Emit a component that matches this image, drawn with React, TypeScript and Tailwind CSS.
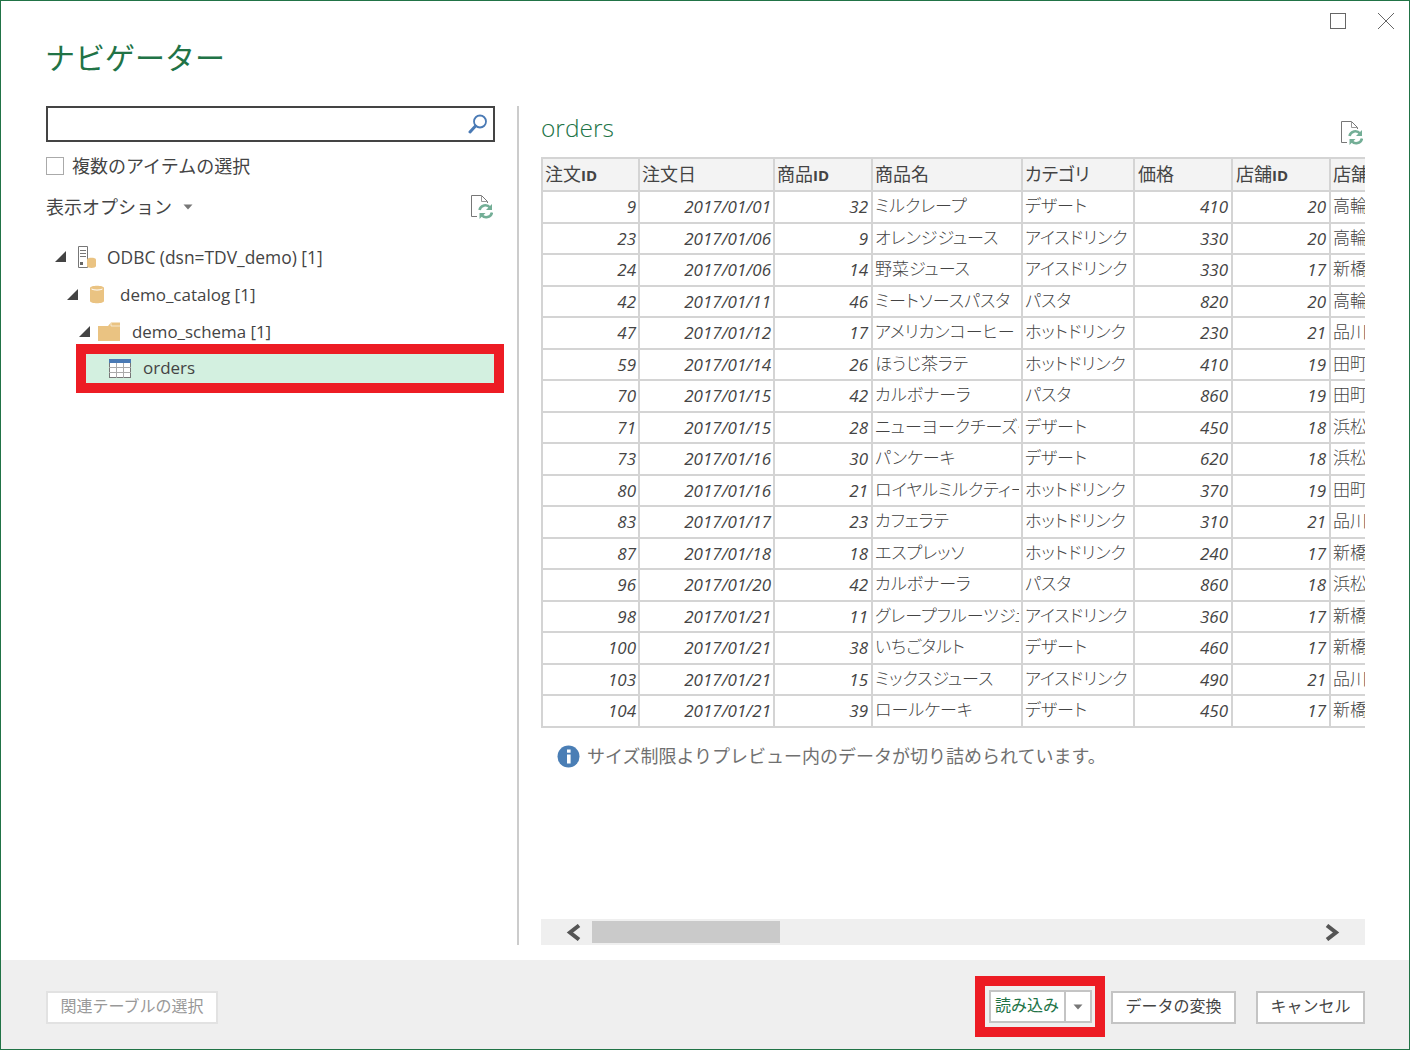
const columns = [
  { label: "注文", id: true, width: "w-[97px]", head: "pl-[2px]", num: "pr-[2px]" },
  { label: "注文日", width: "w-[135px]", head: "pl-[2px]", num: "pr-[2px]" },
  { label: "商品", id: true, width: "w-[98px]", head: "pl-[2px]", num: "pr-[3px]" },
  { label: "商品名", width: "w-[150px]", head: "pl-[2px]", num: "" },
  { label: "カテゴリ", width: "w-[112px]", head: "pl-[2px]", num: "" },
  { label: "価格", width: "w-[98px]", head: "pl-[3px]", num: "pr-[3px]" },
  { label: "店舗", id: true, width: "w-[98px]", head: "pl-[3px]", num: "pr-[3px]" },
  { label: "店舗名", width: "w-[60px]", head: "pl-[2px]", num: "" },
];

const rows = [
  ["9", "2017/01/01", "32", "ミルクレープ", "デザート", "410", "20", "高輪台"],
  ["23", "2017/01/06", "9", "オレンジジュース", "アイスドリンク", "330", "20", "高輪台"],
  ["24", "2017/01/06", "14", "野菜ジュース", "アイスドリンク", "330", "17", "新橋店"],
  ["42", "2017/01/11", "46", "ミートソースパスタ", "パスタ", "820", "20", "高輪台"],
  ["47", "2017/01/12", "17", "アメリカンコーヒー", "ホットドリンク", "230", "21", "品川店"],
  ["59", "2017/01/14", "26", "ほうじ茶ラテ", "ホットドリンク", "410", "19", "田町店"],
  ["70", "2017/01/15", "42", "カルボナーラ", "パスタ", "860", "19", "田町店"],
  ["71", "2017/01/15", "28", "ニューヨークチーズケーキ", "デザート", "450", "18", "浜松町"],
  ["73", "2017/01/16", "30", "パンケーキ", "デザート", "620", "18", "浜松町"],
  ["80", "2017/01/16", "21", "ロイヤルミルクティー", "ホットドリンク", "370", "19", "田町店"],
  ["83", "2017/01/17", "23", "カフェラテ", "ホットドリンク", "310", "21", "品川店"],
  ["87", "2017/01/18", "18", "エスプレッソ", "ホットドリンク", "240", "17", "新橋店"],
  ["96", "2017/01/20", "42", "カルボナーラ", "パスタ", "860", "18", "浜松町"],
  ["98", "2017/01/21", "11", "グレープフルーツジュース", "アイスドリンク", "360", "17", "新橋店"],
  ["100", "2017/01/21", "38", "いちごタルト", "デザート", "460", "17", "新橋店"],
  ["103", "2017/01/21", "15", "ミックスジュース", "アイスドリンク", "490", "21", "品川店"],
  ["104", "2017/01/21", "39", "ロールケーキ", "デザート", "450", "17", "新橋店"],
];

const numericCols = [true, true, true, false, false, true, true, false];

function RefreshDocIcon() {
  return (
    <svg width="23" height="24" viewBox="0 0 23 24" fill="none">
      <path d="M1.5 0.5H11.5L17.5 6.5V8M1.5 0.5V21.5H7" stroke="#777" strokeWidth="1" />
      <path d="M11.5 0.5V6.5H17.5" stroke="#999" strokeWidth="1" />
      <path d="M9.5 15A6 6 0 0 1 20 12.5" stroke="#73ae96" strokeWidth="2.6" />
      <path d="M22 9V15H16Z" fill="#73ae96" />
      <path d="M22 17.5A6 6 0 0 1 11.5 20" stroke="#73ae96" strokeWidth="2.6" />
      <path d="M9.5 24V18H15.5Z" fill="#73ae96" />
    </svg>
  );
}

function Caret() {
  return (
    <svg width="11" height="11" viewBox="0 0 11 11" className="shrink-0">
      <path d="M11 0V11H0Z" fill="#444" />
    </svg>
  );
}

function TreeRow({ pad, icon, label, gap, size }: { pad: string; icon: React.ReactNode; label: string; gap: string; size: string }) {
  return (
    <div className={`h-[37.5px] flex items-center ${pad}`}>
      <Caret />
      <div className={`flex items-center ${gap}`}>
        {icon}
        <span className={`${size} text-[#444] whitespace-nowrap`}>{label}</span>
      </div>
    </div>
  );
}

function Cylinder() {
  return (
    <svg width="14" height="19" viewBox="0 0 14 19">
      <path d="M0 3C0 0 14 0 14 3V16C14 19 0 19 0 16Z" fill="#eac382" />
      <path d="M1.5 4C4 5.4 10 5.4 12.5 4" stroke="#fff" strokeWidth="1" fill="none" />
    </svg>
  );
}

function ScrollChevron({ dir }: { dir: "left" | "right" }) {
  return (
    <svg width="15" height="17" viewBox="0 0 15 17" fill="none" className="shrink-0">
      <path d={dir === "left" ? "M13 1.5L4 8.5L13 15.5" : "M2 1.5L11 8.5L2 15.5"} stroke="#555" strokeWidth="4" />
    </svg>
  );
}

function App() {
  return (
    <div className="w-[1410px] h-[1050px] border border-[#217346] bg-white flex flex-col relative overflow-hidden font-['Open_Sans','Noto_Sans_CJK_JP',sans-serif] text-[#444]">
      {/* window buttons */}
      <div className="absolute top-[11px] right-[14px] flex items-center gap-[31px]">
        <div className="w-[16px] h-[16px] border border-[#666]" />
        <svg width="18" height="18" viewBox="0 0 18 18" fill="none">
          <path d="M1 1L17 17M17 1L1 17" stroke="#666" strokeWidth="1" />
        </svg>
      </div>

      <div className="flex-1 flex flex-col min-h-0">
        <div className="h-[105px] pl-[44px] pt-[35px]">
          <h1 className="text-[30px] leading-[44px] text-[#217346] font-normal">ナビゲーター</h1>
        </div>

        <div className="flex h-[839px]">
          {/* navigator pane */}
          <div className="w-[516px] pl-[45px] shrink-0">
            <div className="w-[449px] h-[36px] border-2 border-[#444] flex items-center justify-end pr-[5px]">
              <svg width="20" height="20" viewBox="0 0 20 20" fill="none">
                <circle cx="12" cy="7.5" r="6" stroke="#4a7ab5" strokeWidth="1.8" />
                <path d="M7.5 12L2 18" stroke="#4a7ab5" strokeWidth="3" strokeLinecap="round" />
              </svg>
            </div>
            <div className="flex items-center gap-[8px] mt-[14px] h-[20px]">
              <div className="w-[18px] h-[18px] border border-[#aaa]" />
              <span className="text-[18px] whitespace-nowrap">複数のアイテムの選択</span>
            </div>
            <div className="flex items-center justify-between w-[449px] mt-[19px] h-[24px]">
              <div className="flex items-center gap-[11px]">
                <span className="text-[18px] whitespace-nowrap">表示オプション</span>
                <svg width="10" height="6" viewBox="0 0 10 6">
                  <path d="M0.5 0.5H9.5L5 5.5Z" fill="#777" />
                </svg>
              </div>
              <div className="mr-[2px]">
                <RefreshDocIcon />
              </div>
            </div>

            <div className="mt-[19px]">
              <TreeRow
                pad="pl-[9px]"
                gap="pl-[12px] gap-[11px]"
                size="text-[17.4px]"
                label="ODBC (dsn=TDV_demo) [1]"
                icon={
                  <svg width="18" height="22" viewBox="0 0 18 22" fill="none">
                    <path d="M0.5 0.5H9.5V21.5H0.5Z" stroke="#777" />
                    <path d="M2 4.5H8M2 7.5H8M2 10.5H8" stroke="#777" />
                    <rect x="2" y="16" width="3" height="3" fill="#666" />
                    <path d="M9 13.5C9 11 18 11 18 13.5V20C18 22.5 9 22.5 9 20Z" fill="#eac382" />
                  </svg>
                }
              />
              <TreeRow
                pad="pl-[21px]"
                gap="pl-[12px] gap-[16px]"
                size="text-[17px]"
                label="demo_catalog [1]"
                icon={<Cylinder />}
              />
              <TreeRow
                pad="pl-[33px]"
                gap="pl-[8px] gap-[12px]"
                size="text-[16.9px]"
                label="demo_schema [1]"
                icon={
                  <svg width="22" height="19" viewBox="0 0 22 19">
                    <path d="M0 4L10 4L13 0.5H22V19H0Z" fill="#eac382" />
                    <path d="M13 1V4H22" stroke="#fff" strokeWidth="0.6" fill="none" />
                  </svg>
                }
              />
              {/* highlighted row with the red marker round it */}
              <div className="-mt-[7px] ml-[30px] w-[428px] h-[49px] border-[10px] border-[#ed1c24]">
                <div className="h-[29px] bg-[#d3f0e0] flex items-center pl-[23px] gap-[12px]">
                  <svg width="22" height="19" viewBox="0 0 22 19" fill="none">
                    <rect x="0.5" y="0.5" width="21" height="18" fill="#fff" stroke="#777" />
                    <rect x="0" y="0" width="22" height="4" fill="#4a7ab5" />
                    <path d="M0 8.5H22M0 13.5H22M7.5 4V19M14.5 4V19" stroke="#aaa" />
                  </svg>
                  <span className="text-[17px]">orders</span>
                </div>
              </div>
            </div>
          </div>

          <div className="w-[2px] bg-[#ccc] shrink-0" />

          {/* preview pane */}
          <div className="ml-[22px] w-[824px] flex flex-col">
            <div className="h-[51px] flex items-start justify-between">
              <span className="text-[24.5px] leading-[44px] font-light text-[#217346]">orders</span>
              <div className="mt-[15px] mr-[2px]">
                <RefreshDocIcon />
              </div>
            </div>

            <div className="w-[824px] overflow-hidden">
              <div className="w-[880px] border-t-2 border-[#d4d4d4]">
                <div className="flex h-[33px] bg-[#f3f3f3] border-b-2 border-[#d4d4d4]">
                  {columns.map((col) => (
                    <div
                      key={col.label}
                      className={`${col.width} ${col.head} shrink-0 border-l-2 border-[#d4d4d4] text-[18px] [font-feature-settings:'palt'] leading-[30px] overflow-hidden whitespace-nowrap`}
                    >
                      {col.label}
                      {col.id && <span className="text-[15px] font-bold">ID</span>}
                    </div>
                  ))}
                </div>
                {rows.map((row) => (
                  <div key={row[0]} className="flex h-[31.5px] border-b-2 border-[#d4d4d4]">
                    {row.map((val, i) =>
                      numericCols[i] ? (
                        <div
                          key={i}
                          className={`${columns[i].width} ${columns[i].num} shrink-0 border-l-2 border-[#d4d4d4] text-right italic text-[17px] leading-[30px] whitespace-nowrap`}
                        >
                          {val}
                        </div>
                      ) : (
                        <div
                          key={i}
                          className={`${columns[i].width} shrink-0 border-l-2 border-[#d4d4d4] px-[2px] text-[17px] font-light [font-feature-settings:'palt'] leading-[28px] whitespace-nowrap`}
                        >
                          <div className="overflow-hidden">{val}</div>
                        </div>
                      )
                    )}
                  </div>
                ))}
              </div>
            </div>

            <div className="flex items-center gap-[7px] pl-[16px] mt-[17px] h-[24px]">
              <svg width="23" height="23" viewBox="0 0 23 23">
                <circle cx="11.5" cy="11.5" r="11" fill="#4a7eb5" />
                <rect x="10" y="9.5" width="3.6" height="9" fill="#fff" />
                <rect x="10" y="4.5" width="3.6" height="3.2" fill="#fff" />
              </svg>
              <span className="text-[18px] text-[#707070] whitespace-nowrap">
                サイズ制限よりプレビュー内のデータが切り詰められています。
              </span>
            </div>

            <div className="mt-auto h-[26px] bg-[#efefef] flex items-center pl-[25px] pr-[25px]">
              <ScrollChevron dir="left" />
              <div className="ml-[11px] w-[188px] h-[22px] bg-[#cacaca]" />
              <div className="ml-auto">
                <ScrollChevron dir="right" />
              </div>
            </div>
          </div>
        </div>
      </div>

      {/* footer */}
      <div className="h-[89px] shrink-0 bg-[#efefef] flex items-start pl-[45px] pr-[44px]">
        <button className="mt-[31px] w-[172px] h-[33px] pb-[3px] bg-white border-2 border-[#e2e2e2] text-[16px] text-[#999]">
          関連テーブルの選択
        </button>
        <div className="ml-auto mt-[16px] w-[130px] h-[61px] border-[10px] border-[#ed1c24] flex items-center justify-center">
          <div className="w-[103px] h-[33px] bg-white border-2 border-[#c4c4c4] flex">
            <span className="w-[73px] text-center text-[16px] leading-[26px] text-[#217346] whitespace-nowrap">読み込み</span>
            <span className="flex-1 border-l-2 border-[#c4c4c4] flex items-center justify-center">
              <svg width="10" height="6" viewBox="0 0 10 6">
                <path d="M0.5 0.5H9.5L5 5.5Z" fill="#777" />
              </svg>
            </span>
          </div>
        </div>
        <button className="ml-[6px] mt-[31px] w-[125px] h-[33px] pb-[3px] bg-white border-2 border-[#c4c4c4] text-[16px] whitespace-nowrap">
          データの変換
        </button>
        <button className="ml-[20px] mt-[31px] w-[109px] h-[33px] pb-[3px] bg-white border-2 border-[#c4c4c4] text-[16px] whitespace-nowrap">
          キャンセル
        </button>
      </div>
    </div>
  );
}

export default App;
